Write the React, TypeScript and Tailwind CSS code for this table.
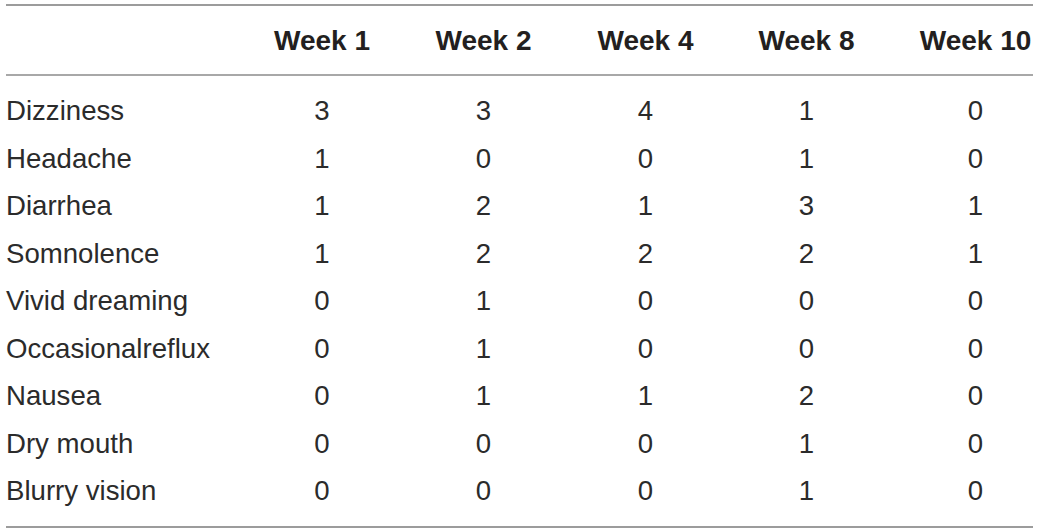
const weeks = ["Week 1", "Week 2", "Week 4", "Week 8", "Week 10"];

const rows: [string, number[]][] = [
  ["Dizziness", [3, 3, 4, 1, 0]],
  ["Headache", [1, 0, 0, 1, 0]],
  ["Diarrhea", [1, 2, 1, 3, 1]],
  ["Somnolence", [1, 2, 2, 2, 1]],
  ["Vivid dreaming", [0, 1, 0, 0, 0]],
  ["Occasionalreflux", [0, 1, 0, 0, 0]],
  ["Nausea", [0, 1, 1, 2, 0]],
  ["Dry mouth", [0, 0, 0, 1, 0]],
  ["Blurry vision", [0, 0, 0, 1, 0]],
];

const cols = "grid grid-cols-[236px_160px_163px_161px_161px_146px]";

export default function App() {
  return (
    <main className="h-[532px] w-[1040px] overflow-hidden bg-white pt-[4px] pl-[6px] font-['Liberation_Sans',Arial,sans-serif] text-[#231f20]">
      <div className="w-[1027px] border-y-2 border-[#9c9c9c]">
        <div className={`${cols} h-[70px] items-center border-b-2 border-[#a8a8a8] pt-[2px] text-[28px] font-bold`}>
          <div />
          {weeks.map((w, i) => (
            <div key={w} className={i === 4 ? "pl-[31px] text-center" : "text-center"}>
              {w}
            </div>
          ))}
        </div>

        <div className="pt-[11px] pb-[11px] text-[27.6px] text-[#2b2b2b]">
          {rows.map(([name, vals]) => (
            <div key={name} className={`${cols} h-[47.5px] items-center`}>
              <div>{name}</div>
              {vals.map((v, i) => (
                <div key={i} className={i === 4 ? "pl-[31px] text-center" : "text-center"}>
                  {v}
                </div>
              ))}
            </div>
          ))}
        </div>
      </div>
    </main>
  );
}
